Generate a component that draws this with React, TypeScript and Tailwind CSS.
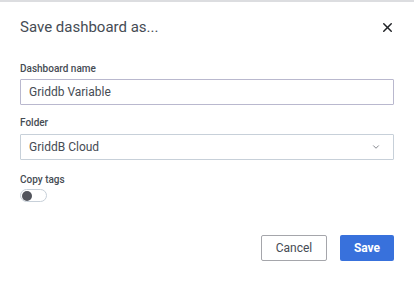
import { X, ChevronDown } from 'lucide-react';

export default function App() {
    return (
        <main className="w-[414px] h-[281px] bg-white border-t-2 border-[#dcdde0] text-[#464c54]" style={{ fontFamily: 'Roboto, "Liberation Sans", sans-serif' }}>
            <div className="h-[50px] flex items-center justify-between pl-5 pr-[19px]">
                <h1 className="text-[15px] leading-none">Save dashboard as...</h1>
                <X className="w-[15px] h-[15px] text-[#202226]" strokeWidth={2.3} />
            </div>
            <div className="px-5 pt-[10px] flex flex-col">
                <label className="text-[10px] leading-[14px] font-medium mb-[3px]">Dashboard name</label>
                <input
                    readOnly
                    value="Griddb Variable"
                    className="h-[26px] border border-[#b9b8ce] rounded-[1px] px-2 text-[12px] text-[#464c54] outline-none"
                />
                <label className="text-[10px] leading-[14px] font-medium mt-[11px] mb-[4px]">Folder</label>
                <div className="h-[26px] border border-[#c7d0d9] rounded-[1px] pl-2 pr-3 flex items-center justify-between text-[12px]">
                    <span>GriddB Cloud</span>
                    <ChevronDown className="w-[10px] h-[10px] text-[#6e7078]" strokeWidth={2} />
                </div>
                <label className="text-[10px] leading-[14px] font-medium mt-[13px] mb-[2px]">Copy tags</label>
                <div className="w-[27px] h-[13px] rounded-full border border-[#c7d0d9] flex items-center pl-[1px]">
                    <div className="w-[10px] h-[10px] rounded-full bg-[#52545c]"></div>
                </div>
                <div className="flex justify-end gap-[13px] mt-[33px]">
                    <button className="h-[26px] w-[66px] border border-[#a5a6ab] bg-white text-[12px] text-[#464c54] rounded-[2px]">Cancel</button>
                    <button className="h-[26px] w-[54px] bg-[#3871dc] text-white text-[12px] font-bold rounded-[2px]">Save</button>
                </div>
            </div>
        </main>
    )
}
